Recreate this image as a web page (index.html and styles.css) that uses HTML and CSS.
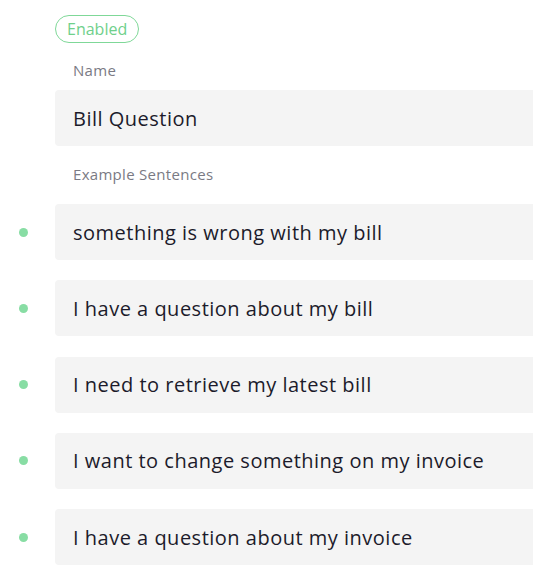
FILE: index.html
```html
<!DOCTYPE html>
<html lang="en">
<head>
    <meta charset="UTF-8">
    <meta name="viewport" content="width=device-width, initial-scale=1.0">
    <title>Intent - Bill Question</title>
    <link rel="stylesheet" href="styles.css">
</head>
<body>
    <div class="intent">
        <div class="row">
            <span class="dot-col"></span>
            <span class="status">Enabled</span>
        </div>

        <div class="row">
            <span class="dot-col"></span>
            <label class="field-label">Name</label>
        </div>
        <div class="row">
            <span class="dot-col"></span>
            <div class="field-box">Bill Question</div>
        </div>

        <div class="row">
            <span class="dot-col"></span>
            <label class="field-label label-examples">Example Sentences</label>
        </div>

        <div class="sentences">
            <div class="row">
                <span class="dot-col"><span class="dot"></span></span>
                <div class="field-box">something is wrong with my bill</div>
            </div>
            <div class="row">
                <span class="dot-col"><span class="dot"></span></span>
                <div class="field-box">I have a question about my bill</div>
            </div>
            <div class="row">
                <span class="dot-col"><span class="dot"></span></span>
                <div class="field-box">I need to retrieve my latest bill</div>
            </div>
            <div class="row">
                <span class="dot-col"><span class="dot"></span></span>
                <div class="field-box">I want to change something on my invoice</div>
            </div>
            <div class="row">
                <span class="dot-col"><span class="dot"></span></span>
                <div class="field-box">I have a question about my invoice</div>
            </div>
        </div>
    </div>
</body>
</html>
```

FILE: styles.css
```css
body {
    margin: 0;
    background-color: #fff;
    font-family: "Open Sans", "Noto Sans", sans-serif;
    color: #1c1b2b;
    overflow: hidden;
}

.intent {
    width: 580px;
    padding-top: 15px;
}

.row {
    display: flex;
    align-items: center;
}

.dot-col {
    flex: 0 0 55px;
    display: flex;
    align-items: center;
}

.dot {
    width: 9px;
    height: 9px;
    margin-left: 19px;
    border-radius: 50%;
    background-color: #88dda4;
}

.status {
    display: inline-block;
    box-sizing: border-box;
    height: 28px;
    line-height: 26px;
    padding: 0 11px;
    border: 1px solid #7fd898;
    border-radius: 14px;
    color: #6fd08b;
    font-size: 16px;
}

.field-label {
    display: block;
    margin: 17px 0 10px 18px;
    line-height: 20px;
    font-size: 15px;
    letter-spacing: 0.3px;
    color: #7a7a84;
}

.label-examples {
    margin-top: 18px;
    margin-bottom: 20px;
}

.field-box {
    flex: 1;
    box-sizing: border-box;
    height: 56px;
    padding: 0 18px;
    display: flex;
    align-items: center;
    background-color: #f4f4f4;
    border-radius: 4px;
    font-size: 20px;
    font-weight: 500;
    letter-spacing: 0.5px;
}

.sentences {
    display: flex;
    flex-direction: column;
    gap: 20.25px;
}
```
